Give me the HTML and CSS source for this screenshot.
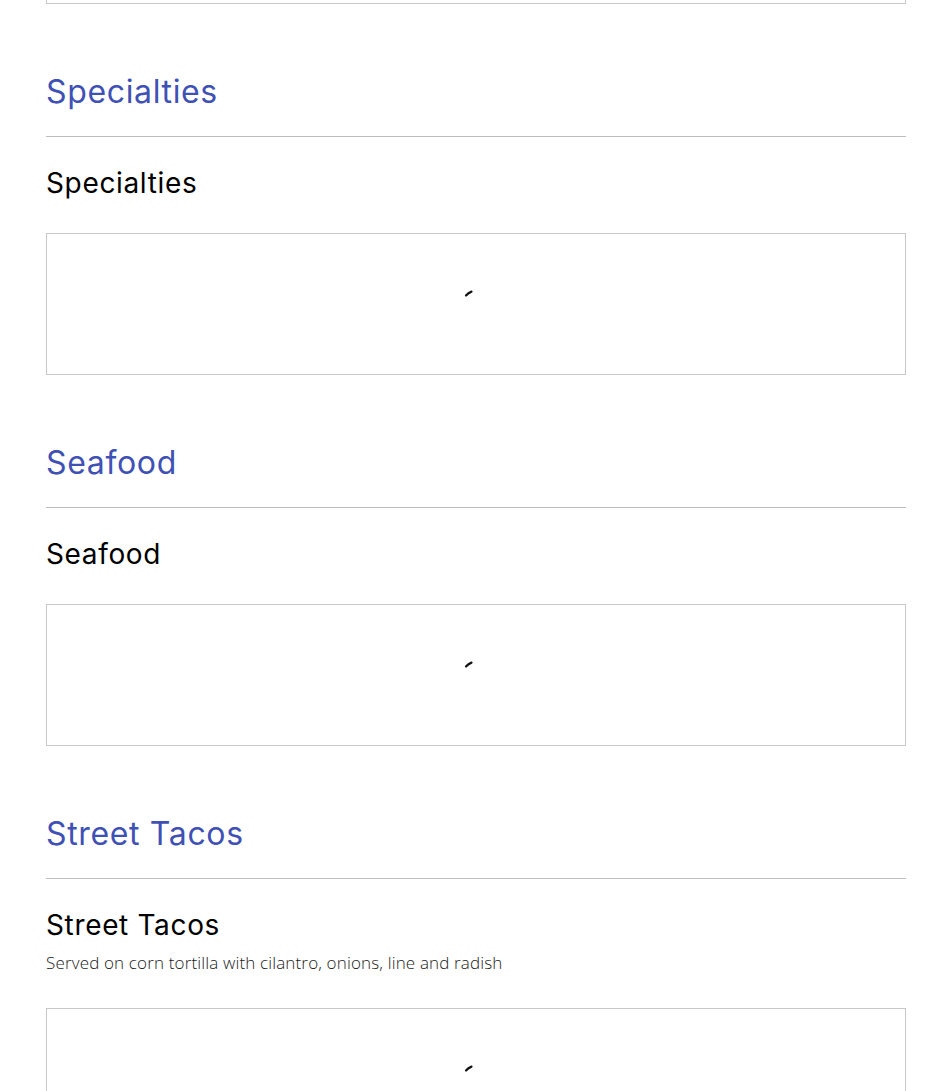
FILE: index.html
```html
<!DOCTYPE html>
<html lang="en">
<head>
<meta charset="utf-8">
<title>Menu</title>
<link rel="stylesheet" href="styles.css">
</head>
<body>
<main class="menu">
  <div class="box box-cut"></div>

  <section class="category">
    <h2 class="cat-title">Specialties</h2>
    <hr class="rule">
    <div class="cat-head">
      <h3 class="sub-title">Specialties</h3>
    </div>
    <div class="box">
      <svg class="spinner" width="34" height="34" viewBox="0 0 34 34"><path d="M7 7.5 Q9.3 4.8 12.5 3.6" fill="none" stroke="#111" stroke-width="2.2" stroke-linecap="round"/></svg>
    </div>
  </section>

  <section class="category">
    <h2 class="cat-title">Seafood</h2>
    <hr class="rule">
    <div class="cat-head">
      <h3 class="sub-title">Seafood</h3>
    </div>
    <div class="box">
      <svg class="spinner" width="34" height="34" viewBox="0 0 34 34"><path d="M7 7.5 Q9.3 4.8 12.5 3.6" fill="none" stroke="#111" stroke-width="2.2" stroke-linecap="round"/></svg>
    </div>
  </section>

  <section class="category">
    <h2 class="cat-title">Street Tacos</h2>
    <hr class="rule">
    <div class="cat-head">
      <h3 class="sub-title">Street Tacos</h3>
      <p class="desc">Served on corn tortilla with cilantro, onions, line and radish</p>
    </div>
    <div class="box">
      <svg class="spinner" width="34" height="34" viewBox="0 0 34 34"><path d="M7 7.5 Q9.3 4.8 12.5 3.6" fill="none" stroke="#111" stroke-width="2.2" stroke-linecap="round"/></svg>
    </div>
  </section>
</main>
</body>
</html>
```
FILE: styles.css
```css
html, body {
  margin: 0;
  padding: 0;
  background: #ffffff;
}

body {
  font-family: Inter, "Liberation Sans", sans-serif;
  color: #111;
  overflow: hidden;
}

.menu {
  display: flex;
  flex-direction: column;
  padding: 0 45px 0 46px;
}

.box {
  box-sizing: border-box;
  height: 142px;
  border: 1px solid #c8c8c8;
  display: flex;
  justify-content: center;
  padding-top: 54px;
}

.box-cut {
  height: 4px;
  border-top: none;
  padding: 0;
}

.spinner {
  display: block;
}

.category {
  display: flex;
  flex-direction: column;
}

.cat-title {
  margin: 68px 0 0;
  height: 40px;
  line-height: 40px;
  font-size: 32px;
  font-weight: 400;
  color: #3f51b5;
  letter-spacing: 0.65px;
}

.rule {
  margin: 24px 0 0;
  border: 0;
  height: 1px;
  background: #bdbdbd;
}

.cat-head {
  display: flex;
  flex-direction: column;
  margin-top: 29px;
  margin-bottom: 33px;
}

.sub-title {
  margin: 0;
  height: 34px;
  line-height: 34px;
  font-size: 28px;
  font-weight: 400;
  color: #000;
  letter-spacing: 0.65px;
}

.desc {
  margin: 9px 0 0;
  line-height: 24px;
  font-family: "Open Sans", sans-serif;
  font-weight: 300;
  font-size: 17px;
  letter-spacing: 0.15px;
  color: #1a1a1a;
}
```
